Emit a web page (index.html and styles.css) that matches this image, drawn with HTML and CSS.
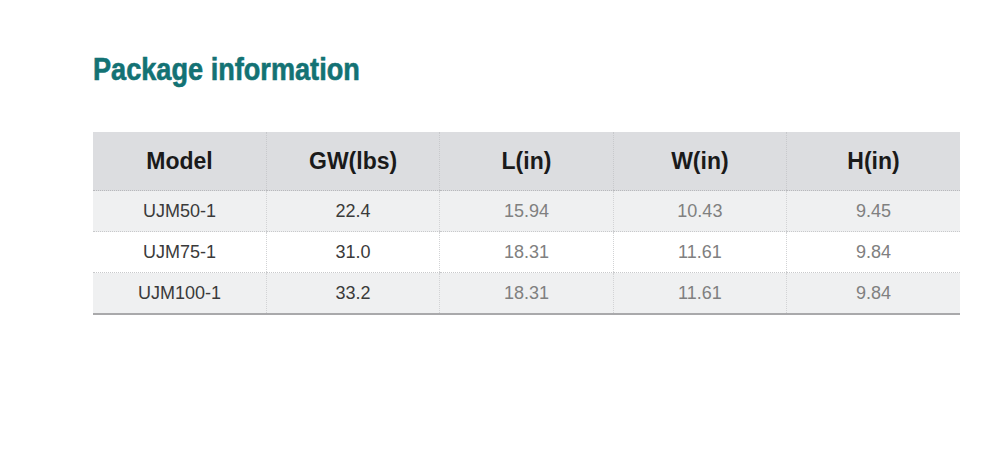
FILE: index.html
```html
<!DOCTYPE html>
<html lang="en">
<head>
    <meta charset="UTF-8">
    <title>Package information</title>
    <link rel="stylesheet" href="styles.css">
</head>
<body>
    <div class="package">
        <h2 class="package-title"><span>Package information</span></h2>
        <table class="package-table">
            <thead>
                <tr>
                    <th>Model</th>
                    <th>GW(lbs)</th>
                    <th>L(in)</th>
                    <th>W(in)</th>
                    <th>H(in)</th>
                </tr>
            </thead>
            <tbody>
                <tr class="shaded">
                    <td>UJM50-1</td>
                    <td>22.4</td>
                    <td class="dim">15.94</td>
                    <td class="dim">10.43</td>
                    <td class="dim">9.45</td>
                </tr>
                <tr>
                    <td>UJM75-1</td>
                    <td>31.0</td>
                    <td class="dim">18.31</td>
                    <td class="dim">11.61</td>
                    <td class="dim">9.84</td>
                </tr>
                <tr class="shaded">
                    <td>UJM100-1</td>
                    <td>33.2</td>
                    <td class="dim">18.31</td>
                    <td class="dim">11.61</td>
                    <td class="dim">9.84</td>
                </tr>
            </tbody>
        </table>
    </div>
</body>
</html>
```

FILE: styles.css
```css
body {
    margin: 0;
    background: #ffffff;
    font-family: "Liberation Sans", Arial, sans-serif;
}
.package {
    padding: 50px 33px 0 93px;
}
.package-title {
    margin: 0 0 42px;
    font-family: "Liberation Sans", Arial, sans-serif;
    font-weight: bold;
    font-size: 31px;
    line-height: 40px;
    color: #137274;
}
/* condensed face isn't available, squeeze the regular bold */
.package-title span {
    display: inline-block;
    transform: scaleX(0.875);
    transform-origin: left center;
    -webkit-text-stroke: 0.6px #137274;
}
.package-table {
    width: 867px;
    border-collapse: collapse;
    table-layout: fixed;
    border-bottom: 2px solid #a9a9ab;
}
.package-table th {
    height: 58px;
    padding: 0;
    background: #dcdde0;
    color: #1a1a1a;
    font-size: 23px;
    font-weight: bold;
    text-align: center;
    border-left: 1px dotted #c8c9cc;
    border-bottom: 1px dotted #b8b9bc;
}
.package-table td {
    height: 40px;
    padding: 0;
    color: #3a3a3a;
    font-size: 18px;
    text-align: center;
    border-left: 1px dotted #d2d3d5;
    border-bottom: 1px dotted #c8c9cb;
}
.package-table th:first-child,
.package-table td:first-child {
    border-left: none;
}
.package-table tr:last-child td {
    border-bottom: none;
}
.package-table .shaded td {
    background: #eff0f1;
}
.package-table td.dim {
    color: #808080;
}
```
